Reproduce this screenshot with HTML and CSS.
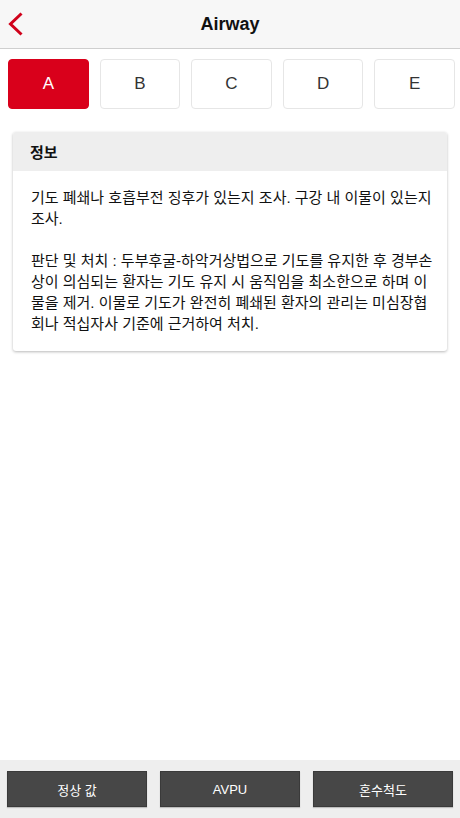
FILE: index.html
```html
<!DOCTYPE html>
<html lang="ko">
<head>
<meta charset="utf-8">
<link rel="stylesheet" href="styles.css">
</head>
<body>
<div class="app">
  <header class="topbar">
    <button class="back" aria-label="back">
      <svg width="18" height="26" viewBox="0 0 18 26"><path d="M14.5 2.5 L3.5 13 L14.5 23.5" fill="none" stroke="#d0021b" stroke-width="3" stroke-linecap="butt" stroke-linejoin="miter"/></svg>
    </button>
    <h1 class="title">Airway</h1>
  </header>
  <nav class="tabs">
    <div class="tab active">A</div>
    <div class="tab">B</div>
    <div class="tab">C</div>
    <div class="tab">D</div>
    <div class="tab">E</div>
  </nav>
  <main class="content">
    <section class="card">
      <div class="card-head">정보</div>
      <div class="card-body">기도 폐쇄나 호흡부전 징후가 있는지 조사. 구강 내 이물이 있는지 조사.<br><br>판단 및 처치 : 두부후굴-하악거상법으로 기도를 유지한 후 경부손상이 의심되는 환자는 기도 유지 시 움직임을 최소한으로 하며 이물을 제거. 이물로 기도가 완전히 폐쇄된 환자의 관리는 미심장협회나 적십자사 기준에 근거하여 처치.</div>
    </section>
  </main>
  <footer class="bottombar">
    <button class="btn">정상 값</button>
    <button class="btn">AVPU</button>
    <button class="btn">혼수척도</button>
  </footer>
</div>
</body>
</html>
```
FILE: styles.css
```css
* { box-sizing: border-box; }
html, body { margin: 0; padding: 0; }
body {
  font-family: "Liberation Sans", "Noto Sans CJK KR", sans-serif;
  color: #222;
  background: #fff;
}
.app {
  display: flex;
  flex-direction: column;
  height: 818px;
}
.topbar {
  position: relative;
  height: 49px;
  background: #f7f7f7;
  border-bottom: 1px solid #cfcfcf;
  display: flex;
  align-items: center;
  justify-content: center;
}
.back {
  position: absolute;
  left: 7px;
  top: 11px;
  padding: 0;
  border: 0;
  background: none;
  width: 18px;
  height: 26px;
}
.back svg { display: block; }
.title {
  margin: 0;
  font-size: 18px;
  font-weight: bold;
  color: #111;
}
.tabs {
  display: flex;
  gap: 11px;
  padding: 10px 5px 0 8px;
}
.tab {
  flex: 1;
  height: 50px;
  border: 1px solid #e6e6e6;
  border-radius: 4px;
  background: #fff;
  display: flex;
  align-items: center;
  justify-content: center;
  font-size: 17px;
  color: #333;
}
.tab.active {
  background: #d9001b;
  border-color: #d9001b;
  color: #fff;
}
.content {
  flex: 1;
  padding: 23px 13px 0 13px;
}
.card {
  background: #fff;
  border-radius: 3px;
  box-shadow: 0 1px 3px rgba(0,0,0,0.28);
  overflow: hidden;
}
.card-head {
  height: 39px;
  background: #eeeeee;
  display: flex;
  align-items: center;
  padding-left: 17px;
  font-size: 15px;
  font-weight: bold;
  color: #111;
}
.card-body {
  padding: 16px 14px 17px 18px;
  font-size: 15px;
  line-height: 21px;
  color: #111;
  word-break: break-all;
}
.bottombar {
  height: 58px;
  background: #eeeeee;
  display: flex;
  gap: 13px;
  padding: 11px 7px 0 7px;
}
.btn {
  flex: 1;
  height: 36px;
  background: #474747;
  border: 1px solid #3a3a3a;
  box-shadow: 0 1px 1px rgba(0,0,0,0.2);
  color: #fff;
  font-family: "Liberation Sans", "Noto Sans CJK KR", sans-serif;
  font-size: 13px;
  padding: 0;
}
```
